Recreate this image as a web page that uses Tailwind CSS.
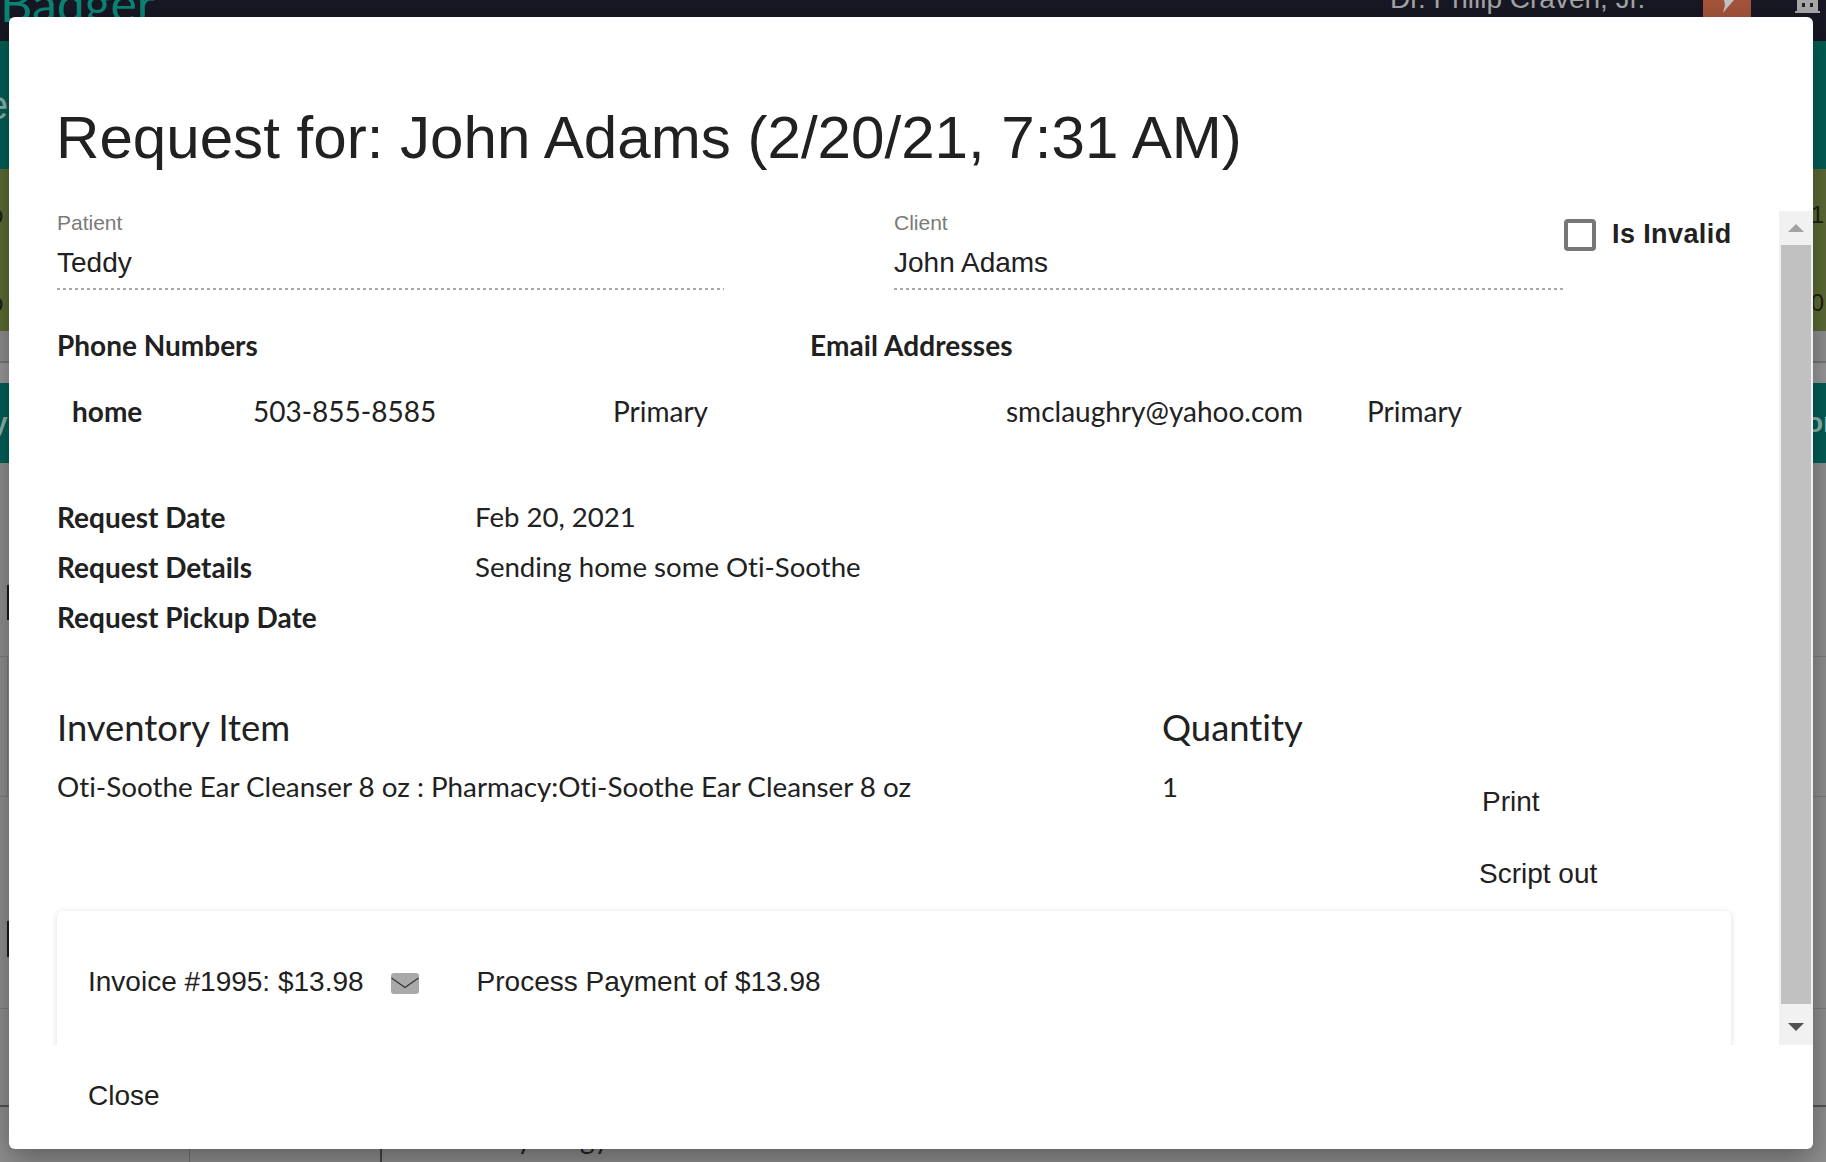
<!DOCTYPE html>
<html>
  <head>
    <title>Request</title>
    <meta name="viewport" content="width=device-width, initial-scale=1">
    <script src="https://cdn.jsdelivr.net/npm/@tailwindcss/browser@4"></script>
  </head>
  <body class="relative w-[1826px] h-[1162px] overflow-hidden bg-[#8f8f8f] font-['Liberation_Sans',sans-serif] text-[#212121]">
    <!-- page behind the dialog -->
    <div class="flex flex-col h-full">
      <div class="flex h-[41px] bg-[#181824] overflow-hidden">
        <div class="w-[1390px] mt-[-30px] text-[50px] leading-[66px] text-[#0b8577] font-['Lato',sans-serif]">Badger</div>
        <div class="w-[313px] mt-[-17px] text-[28px] leading-[32px] text-[#a5a5a5] whitespace-nowrap">Dr. Philip Craven, Jr.</div>
        <div class="w-[48px] h-[41px] bg-[#a5543a] flex justify-center">
          <svg width="14" height="13" viewBox="0 0 14 13"><path d="M4 0 H14 L7 8 L3 13 L5 5 Z" fill="#c4c4c4"/></svg>
        </div>
        <svg class="ml-[44px]" width="25" height="13" viewBox="0 0 25 13"><path d="M2 0 H23 V11 H25 V13 H0 V11 H2 Z" fill="#a8a8a8"/><rect x="7" y="3" width="3" height="4" fill="#222"/><rect x="15" y="3" width="3" height="4" fill="#222"/></svg>
      </div>
      <div class="h-[128px] bg-[#005f56] flex justify-between items-center overflow-hidden text-[#8fb3ae] text-[40px]">
        <span class="ml-[-14px]">e</span>
      </div>
      <div class="h-[162px] bg-[#5c6b35] flex justify-between text-[#1c2010] text-[24px] overflow-hidden">
        <div class="flex flex-col ml-[-10px] pt-[28px] gap-[52px]"><span>o</span><span>o</span></div>
        <div class="flex flex-col mr-[2px] pt-[28px] gap-[52px]"><span>1</span><span>0</span></div>
      </div>
      <div class="h-[32px] bg-[#8f8f8f] border-b-2 border-[#777]"></div>
      <div class="h-[20px] bg-[#999]"></div>
      <div class="h-[80px] bg-[#005f56] flex justify-between items-center text-[#8fb3ae] text-[28px] font-bold overflow-hidden">
        <span class="ml-[-8px]">y</span><span class="mr-[-8px]">or</span>
      </div>
      <div class="h-[193px] pl-[7px] pt-[122px]"><div class="w-[3px] h-[35px] bg-[#1a1a1a]"></div></div>
      <div class="h-[141px] border-y border-[#7d7d7d] pl-[7px]"><div class="h-full border-l border-[#7d7d7d]"></div></div>
      <div class="h-[212px] border-b border-[#7d7d7d] pl-[7px] pt-[124px]"><div class="w-[3px] h-[36px] bg-[#1a1a1a]"></div></div>
      <div class="h-[96px]"></div>
      <div class="flex-1 border-t-2 border-[#555] pl-[189px] flex overflow-hidden">
        <div class="w-[191px] border-l border-[#6e6e6e]"></div>
        <div class="border-l-2 border-[#444] pl-[117px] pt-[16px] text-[28px] leading-[30px] text-[#222] font-['Lato',sans-serif]">Cytology</div>
      </div>
    </div>

    <!-- dialog -->
    <div class="absolute left-[9px] top-[17px] w-[1804px] h-[1132px] flex flex-col bg-white rounded-[6px] shadow-[0_10px_30px_rgba(0,0,0,0.35)]">
      <h1 class="pl-[47px] pt-[86px] h-[194px] text-[60.1px] leading-[70px] whitespace-nowrap">Request for: John Adams (2/20/21, 7:31 AM)</h1>

      <div class="flex h-[834px]">
        <div class="flex-1 overflow-hidden pl-[48px] pr-[48px] font-['Lato',sans-serif] [font-variant-ligatures:none] text-[27.6px]">
          <div class="flex font-['Liberation_Sans',sans-serif] whitespace-nowrap">
            <div class="w-[667px] mr-[170px] shrink-0">
              <div class="pt-[2px] text-[21px] leading-[20px] text-[#7a7a7a]">Patient</div>
              <div class="mt-[11px] h-[38px] text-[28px] leading-[38px]">Teddy</div>
              <div class="mt-[6px] h-[2px] bg-[repeating-linear-gradient(to_right,#a8a8a8_0,#a8a8a8_3px,transparent_3px,transparent_6px)]"></div>
            </div>
            <div class="w-[669px] shrink-0">
              <div class="pt-[2px] text-[21px] leading-[20px] text-[#7a7a7a]">Client</div>
              <div class="mt-[11px] h-[38px] text-[28px] leading-[38px]">John Adams</div>
              <div class="mt-[6px] h-[2px] bg-[repeating-linear-gradient(to_right,#a8a8a8_0,#a8a8a8_3px,transparent_3px,transparent_6px)]"></div>
            </div>
            <div class="flex items-start ml-[1px] mt-[8px]">
              <div class="w-[32px] h-[32px] border-[4px] border-[#777] rounded-[4px] shrink-0"></div>
              <span class="ml-[16px] text-[27px] leading-[30px] font-bold tracking-[0.4px]">Is Invalid</span>
            </div>
          </div>

          <div class="flex mt-[36px] text-[28px] leading-[38px] font-bold">
            <div class="w-[753px]">Phone Numbers</div>
            <div class="tracking-[0.1px]">Email Addresses</div>
          </div>
          <div class="flex mt-[28px] text-[28px] leading-[38px]">
            <span class="w-[196px] pl-[15px] font-bold">home</span>
            <span class="w-[360px]">503-855-8585</span>
            <span class="w-[393px]">Primary</span>
            <span class="w-[361px]">smclaughry@yahoo.com</span>
            <span>Primary</span>
          </div>

          <div class="mt-[68px] flex flex-col gap-[12px] leading-[38px]">
            <div class="flex"><span class="w-[418px] text-[28px] font-bold">Request Date</span><span>Feb 20, 2021</span></div>
            <div class="flex"><span class="w-[418px] text-[28px] font-bold">Request Details</span><span>Sending home some Oti-Soothe</span></div>
            <div class="flex"><span class="w-[418px] text-[28px] font-bold">Request Pickup Date</span><span></span></div>
          </div>

          <div class="flex mt-[66px] text-[36.4px] leading-[50px]">
            <div class="w-[1105px]">Inventory Item</div>
            <div>Quantity</div>
          </div>
          <div class="flex h-[144px] mt-[16px] leading-[38px]">
            <div class="w-[1105px] text-[27.8px]">Oti-Soothe Ear Cleanser 8 oz : Pharmacy:Oti-Soothe Ear Cleanser 8 oz</div>
            <div class="w-[320px]">1</div>
            <div class="flex-1 font-['Liberation_Sans',sans-serif] text-[28px] whitespace-nowrap">
              <div class="mt-[15px]">Print</div>
              <div class="ml-[-3px] mt-[34px]">Script out</div>
            </div>
          </div>

          <div class="mt-[-1px] h-[200px] flex items-start pl-[31px] pt-[53px] rounded-[6px] shadow-[0_1px_6px_rgba(0,0,0,0.14)] font-['Liberation_Sans',sans-serif] text-[28px] leading-[36px] whitespace-nowrap">
            <span>Invoice #1995: $13.98</span>
            <svg class="ml-[27px] mt-[9px]" width="28" height="21" viewBox="0 0 28 21">
              <rect width="28" height="21" rx="3" fill="#a9a9a9"/>
              <path d="M0.5 5 L14 14.5 L27.5 5" fill="none" stroke="#333" stroke-width="1.2"/>
            </svg>
            <span class="ml-[58px]">Process Payment of $13.98</span>
          </div>
        </div>

        <!-- scrollbar -->
        <div class="flex flex-col w-[34px] bg-[#f1f1f1]">
          <div class="h-[34px] flex items-center justify-center">
            <div class="w-0 h-0 border-x-[8px] border-x-transparent border-b-[8px] border-b-[#a3a3a3]"></div>
          </div>
          <div class="h-[759px] mx-[2px] bg-[#c1c1c1]"></div>
          <div class="flex-1 flex items-center justify-center pt-[4px]">
            <div class="w-0 h-0 border-x-[8px] border-x-transparent border-t-[8px] border-t-[#505050]"></div>
          </div>
        </div>
      </div>

      <div class="pl-[79px] pt-[33px] text-[28px] leading-[36px]">Close</div>
    </div>
  </body>
</html>
